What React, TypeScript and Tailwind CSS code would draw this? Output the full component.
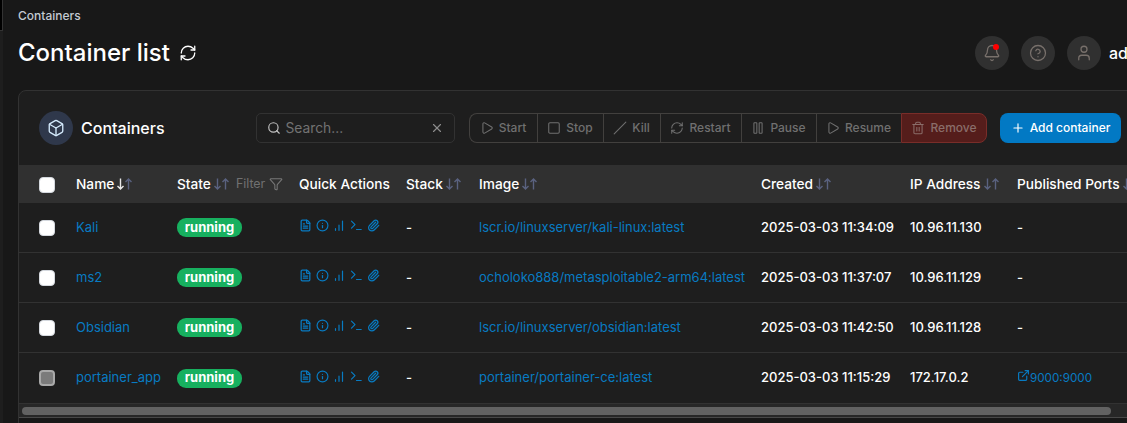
import React from 'react';
import {
  Bell, Box, CircleHelp, ExternalLink, FileText, Filter, Info,
  Paperclip, Pause, Play, Plus, RefreshCw, Search, Slash, Square, Trash2, User, X,
} from 'lucide-react';

const GRID = 'grid grid-cols-[57px_101px_122px_107px_73px_282px_149px_107px_200px] items-center';

function Sort({ active = false }: { active?: boolean }) {
  return (
    <span className="ml-[2px] flex shrink-0">
      <svg width="16" height="14" viewBox="0 0 16 14" fill="none" strokeWidth="1.4">
        <path d="M4.5 1.5v10.5M1.5 9L4.5 12l3-3" className={active ? 'stroke-[#e8e8e8]' : 'stroke-[#5a6280]'} />
        <path d="M12.5 12.5V2M9.5 5l3-3 3 3" className="stroke-[#5a6280]" />
      </svg>
    </span>
  );
}

function Head({ label, active, plain, children }: { label: string; active?: boolean; plain?: boolean; children?: React.ReactNode }) {
  return (
    <div className="flex items-center whitespace-nowrap">
      <span>{label}</span>
      {!plain && <Sort active={active} />}
      {children}
    </div>
  );
}

function QuickActions() {
  return (
    <div className="-mt-[4px] flex items-center gap-[4px] text-[#087bc2]">
      <FileText size={13} strokeWidth={2.3} />
      <Info size={13} strokeWidth={2.2} />
      <svg width="13" height="13" viewBox="0 0 13 13" fill="none" stroke="currentColor" strokeWidth="1.2" strokeLinecap="round">
        <path d="M2.5 11.3V9.7M6 11.3V6.2M9.5 11.3V2" />
      </svg>
      <svg width="13" height="13" viewBox="0 0 13 13" fill="none" stroke="currentColor" strokeWidth="1.2" strokeLinecap="round" strokeLinejoin="round">
        <path d="M1.5 2.2L5 5.7L1.5 9.2M6.5 10.5H11.2" />
      </svg>
      <Paperclip size={13} strokeWidth={2.3} />
    </div>
  );
}

const rows = [
  { name: 'Kali', image: 'lscr.io/linuxserver/kali-linux:latest', created: '2025-03-03 11:34:09', ip: '10.96.11.130' },
  { name: 'ms2', image: 'ocholoko888/metasploitable2-arm64:latest', created: '2025-03-03 11:37:07', ip: '10.96.11.129' },
  { name: 'Obsidian', image: 'lscr.io/linuxserver/obsidian:latest', created: '2025-03-03 11:42:50', ip: '10.96.11.128' },
  { name: 'portainer_app', image: 'portainer/portainer-ce:latest', created: '2025-03-03 11:15:29', ip: '172.17.0.2', port: '9000:9000', locked: true },
];

const actions = [
  { label: 'Start', icon: Play, width: 'w-[68px]' },
  { label: 'Stop', icon: Square, width: 'w-[66px]' },
  { label: 'Kill', icon: Slash, width: 'w-[57px]' },
  { label: 'Restart', icon: RefreshCw, width: 'w-[81px]' },
  { label: 'Pause', icon: Pause, width: 'w-[75px]' },
  { label: 'Resume', icon: Play, width: 'w-[85px]' },
];

function Checkbox({ locked }: { locked?: boolean }) {
  return (
    <span
      className={
        locked
          ? 'ml-[20px] -mt-px block size-4 rounded-[4px] border-2 border-[#a9a9a9] bg-[#7b7b7b]'
          : 'ml-[20px] mt-px block size-4 rounded-[4px] border border-[#d4d8de] bg-white'
      }
    />
  );
}

function RoundButton({ children }: { children: React.ReactNode }) {
  return <div className="relative flex size-[34px] items-center justify-center rounded-full bg-[#303030] text-[#78706b]">{children}</div>;
}

export default function App() {
  return (
    <div className="flex h-[423px] w-full overflow-hidden bg-[#181818] font-['Inter',sans-serif] text-white">
      <aside className="w-[3px] shrink-0 bg-[#1e1e1e]">
        <div className="h-[31px] w-[3px] border-r border-b border-[#333333] bg-black" />
      </aside>
      <main className="min-w-0 flex-1 pl-[15px]">
        <div className="h-[31px] pt-[7px] text-[12px] leading-[17px] font-medium text-[#c4cad2]">Containers</div>
        <header className="flex h-[44px] items-center">
          <h1 className="text-[24px] leading-8 font-medium whitespace-nowrap">Container list</h1>
          <RefreshCw size={18} strokeWidth={1.7} className="ml-[9px]" />
          <div className="ml-auto flex shrink-0 items-center gap-[12px]">
            <RoundButton>
              <Bell size={18} strokeWidth={1.7} />
              <span className="absolute top-[8px] right-[10px] size-[6px] rounded-full bg-[#ff0000]" />
            </RoundButton>
            <RoundButton><CircleHelp size={18} strokeWidth={1.7} /></RoundButton>
            <RoundButton><User size={18} strokeWidth={1.7} /></RoundButton>
            <span className="-ml-[4px] w-[18px] overflow-hidden text-[16px] font-medium">ad</span>
          </div>
        </header>

        <section className="mt-[15px] h-[340px] w-[1120px] overflow-hidden rounded-tl-lg border border-[#323232] bg-[#1e1e1e]">
          <div className="flex h-[74px] items-center pl-[20px]">
            <div className="flex size-[34px] items-center justify-center rounded-full bg-[#2f384b] text-[#d3e9fb]">
              <Box size={18} strokeWidth={1.8} />
            </div>
            <h2 className="ml-[8px] w-[175px] text-[16px] font-medium">Containers</h2>
            <div className="flex h-[30px] w-[199px] items-center rounded-[5px] border border-[#323232] pl-[10px] pr-[10px]">
              <Search size={14} strokeWidth={2} className="text-[#c3c3c3]" />
              <span className="ml-[4.5px] text-[13.8px] leading-[18px] text-[#727272]">Search...</span>
              <X size={14} strokeWidth={2} className="ml-auto text-[#8b8b8b]" />
            </div>
            <div className="ml-[14px] flex h-[30px] text-[12px] font-medium text-[#707070]">
              {actions.map(({ label, icon: Icon, width }) => (
                <div key={label} className={`${width} flex items-center justify-center gap-[5px] border-y border-l border-[#42403e] pr-px whitespace-nowrap first:rounded-l-lg`}>
                  <Icon size={14} strokeWidth={1.8} className="shrink-0" />
                  {label}
                </div>
              ))}
              <div className="flex w-[86px] items-center justify-center gap-[5px] rounded-r-lg border border-[#792d29] bg-[#551d1b] text-[#8a6d6a]">
                <Trash2 size={14} strokeWidth={1.8} />
                Remove
              </div>
            </div>
            <div className="ml-[13px] flex h-[30px] w-[121px] items-center justify-center gap-[5px] rounded-lg bg-[#0279c4] text-[12px] font-medium whitespace-nowrap">
              <Plus size={14} strokeWidth={2} />
              Add container
            </div>
          </div>

          <div className={`${GRID} h-[38px] bg-[#303030] text-[13.7px] font-medium`}>
            <Checkbox />
            <Head label="Name" active />
            <Head label="State">
              <span className="ml-[7px] text-[12.4px] font-normal text-[#717171]">Filter</span>
              <Filter size={14} strokeWidth={1.8} className="ml-[4px] text-[#777777]" />
            </Head>
            <Head label="Quick Actions" plain />
            <Head label="Stack" />
            <Head label="Image" />
            <Head label="Created" />
            <Head label="IP Address" />
            <Head label="Published Ports" />
          </div>

          {rows.map((row) => (
            <div key={row.name} className={`${GRID} ${row.locked ? 'h-[51px]' : 'h-[50px]'} border-b border-[#323232] text-[13px] whitespace-nowrap`}>
              <Checkbox locked={row.locked} />
              <span className="text-[#087bc2]">{row.name}</span>
              <span className="flex h-[19px] w-[65px] items-center justify-center rounded-[9px] bg-[#17b05f] text-[13px] font-bold">running</span>
              <QuickActions />
              <span className="font-medium">-</span>
              <span className="text-[#087bc2]">{row.image}</span>
              <span className="font-medium">{row.created}</span>
              <span className="font-medium">{row.ip}</span>
              {row.port ? (
                <span className="flex items-center text-[#087bc2]">
                  <ExternalLink size={13} strokeWidth={2.2} className="-mt-[4px]" />
                  <span className="pt-[2px] text-[11.7px]">{row.port}</span>
                </span>
              ) : (
                <span className="font-medium">-</span>
              )}
            </div>
          ))}
          <div className="h-[14px] border-b border-[#484848] bg-[#272727] px-[3px] pt-[3px]">
            <div className="h-[8px] w-[1089px] rounded-full bg-[#626262]" />
          </div>
          <div className="h-[8px] bg-[#181818]" />
        </section>
      </main>
    </div>
  );
}
